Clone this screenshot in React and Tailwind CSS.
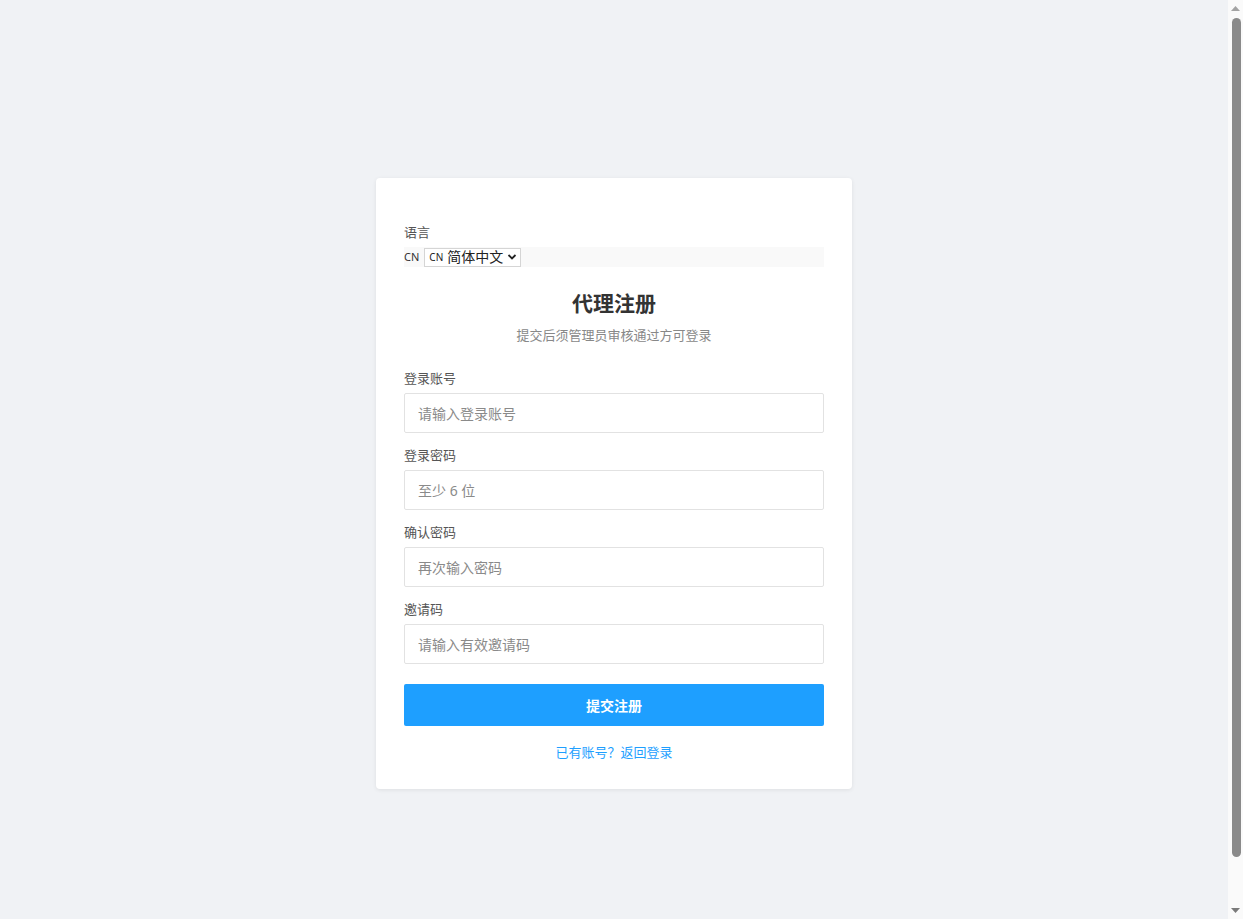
import React from "react";

const font = { fontFamily: '"Noto Sans", "Noto Sans CJK SC", sans-serif' };

function Field({ label, placeholder, type = "text" }) {
  return (
    <div className="flex flex-col">
      <label className="text-[13px] leading-5 text-[#555]">{label}</label>
      <input
        type={type}
        placeholder={placeholder}
        className="mt-[5px] h-10 w-full rounded-[2px] border border-[#e2e2e2] bg-white px-[13px] text-[14px] text-[#333] outline-none placeholder:text-[#8a8a8a]"
      />
    </div>
  );
}

function Scrollbar() {
  return (
    <div className="flex h-screen w-[15px] shrink-0 flex-col items-center bg-[#fafafa]">
      <svg className="mt-[6px]" width="9" height="5" viewBox="0 0 9 5">
        <path d="M0 5 L4.5 0 L9 5 Z" fill="#a3a3a3" />
      </svg>
      <div className="ml-[1px] mt-[7px] h-[839px] w-[9px] rounded-[5px] bg-[#8a8a8a]" />
      <div className="flex-1" />
      <svg className="mb-[6px]" width="9" height="5" viewBox="0 0 9 5">
        <path d="M0 0 L9 0 L4.5 5 Z" fill="#7a7a7a" />
      </svg>
    </div>
  );
}

export default function App() {
  return (
    <div className="flex h-screen overflow-hidden bg-[#f0f2f5]" style={font}>
      <div className="h-screen flex-1 overflow-hidden">
        <div className="box-content flex min-h-screen items-center justify-center py-6">
          <div className="w-[476px] rounded-[4px] bg-white px-7 pb-[27px] pt-[44px] shadow-[0_1px_4px_rgba(0,0,0,0.08)]">
            <div className="text-[13px] leading-5 text-[#555]">语言</div>
            <div className="mt-[5px] flex h-5 items-center bg-[#f9f9f9]">
              <span className="text-[11px] text-[#333]">CN</span>
              <div className="ml-[5px] flex h-[19px] items-center border border-[#d5d5d5] bg-white pl-[4px] pr-[3px]">
                <span className="text-[10px] text-[#222]">CN</span>
                <span className="ml-[4px] text-[14px] leading-none text-[#222]">简体中文</span>
                <svg className="ml-[4px]" width="10" height="10" viewBox="0 0 10 10">
                  <path d="M1.5 3 L5 6.5 L8.5 3" fill="none" stroke="#222" strokeWidth="1.8" />
                </svg>
              </div>
            </div>
            <h1 className="mt-[22px] text-center text-[21px] font-bold leading-7 text-[#333]">代理注册</h1>
            <p className="mt-2 text-center text-[13px] leading-5 text-[#888]">提交后须管理员审核通过方可登录</p>
            <div className="mt-[23px] flex flex-col gap-3">
              <Field label="登录账号" placeholder="请输入登录账号" />
              <Field label="登录密码" placeholder="至少 6 位" type="password" />
              <Field label="确认密码" placeholder="再次输入密码" type="password" />
              <Field label="邀请码" placeholder="请输入有效邀请码" />
            </div>
            <button className="mt-5 h-[42px] w-full rounded-[2px] bg-[#1e9fff] text-[14px] font-semibold text-white">提交注册</button>
            <div className="mt-4 text-center text-[13px] leading-5">
              <a className="text-[#1e9fff]" href="#">已有账号？返回登录</a>
            </div>
          </div>
        </div>
      </div>
      <Scrollbar />
    </div>
  );
}
